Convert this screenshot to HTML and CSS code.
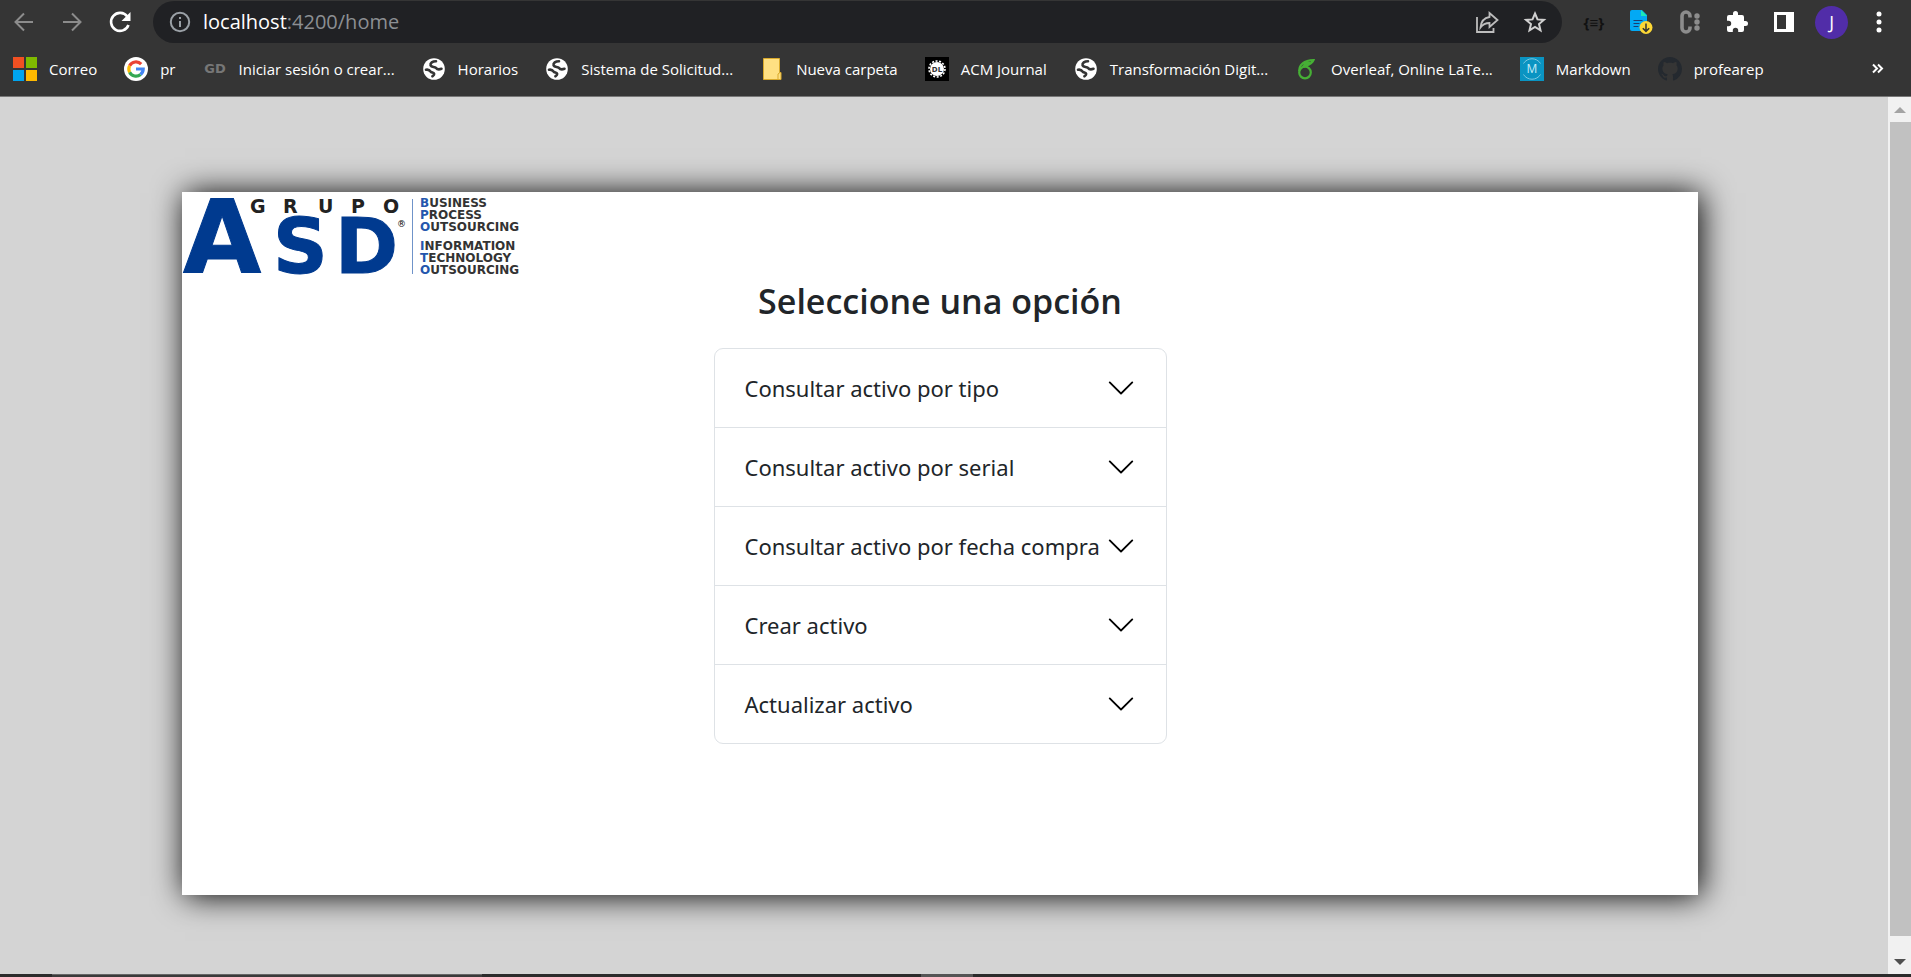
FILE: index.html
```html
<!DOCTYPE html>
<html lang="es">
<head>
<meta charset="utf-8">
<title>Inicio</title>
<link rel="stylesheet" href="styles.css">
</head>
<body>
<svg class="defs" aria-hidden="true">
  <symbol id="globe" viewBox="0 0 24 24"><circle cx="12" cy="12" r="10.800" fill="#fff"/><path d="M14 4.200C10.500 4.200 8 6 8.600 8.300c1 2 4 1.200 5.400 2.700 1.200 1.600 3.300 1.600 5.500.8M4 12.800c2.500-.6 3.800.6 4.800 2 1.500.9 3.200.5 3.400 2 .1 1.300-.8 1.800-1.800 2.500" fill="none" stroke="#353535" stroke-width="2.600" stroke-linecap="round" stroke-linejoin="round"/></symbol>
  <symbol id="chevron" viewBox="0 0 16 16"><path fill-rule="evenodd" d="M1.646 4.646a.5.5 0 0 1 .708 0L8 10.293l5.646-5.647a.5.5 0 0 1 .708.708l-6 6a.5.5 0 0 1-.708 0l-6-6a.5.5 0 0 1 0-.708z"/></symbol>
</svg>
<header class="browser">
  <div class="toolbar">
    <nav class="nav" aria-label="Navegación">
      <button class="tool" aria-label="Atrás"><svg width="20" height="20" viewBox="0 0 20 20" fill="none" stroke="#8c8c8c" stroke-width="2"><path d="M19 10H2M10 1.500 1.500 10 10 18.500"/></svg></button>
      <button class="tool" aria-label="Adelante"><svg width="20" height="20" viewBox="0 0 20 20" fill="none" stroke="#8c8c8c" stroke-width="2"><path d="M1 10h17M10 1.500 18.500 10 10 18.500"/></svg></button>
      <button class="tool" aria-label="Recargar"><svg width="22" height="22" viewBox="0 0 22 22"><path d="M18.300 5.500A9 9 0 1 0 19.500 14" fill="none" stroke="#fff" stroke-width="2.600"/><path d="M21.500 1v9h-9z" fill="#fff"/></svg></button>
    </nav>
    <div class="address">
      <svg width="22" height="22" viewBox="0 0 22 22"><circle cx="11" cy="11" r="9.200" fill="none" stroke="#9aa0a6" stroke-width="2"/><path d="M10 10h2v6h-2zM10 6h2v2h-2z" fill="#9aa0a6"/></svg>
      <span class="url"><span class="host">localhost</span>:4200/home</span>
      <button class="tool" aria-label="Compartir"><svg width="24" height="24" viewBox="0 0 24 24" fill="none" stroke="#bdbdbd" stroke-width="1.800"><path d="M2 7v15h16.500v-4"/><path d="M14.500 7V3l8 7-8 7v-4c-4 0-6.500 1-9 4.500C6 12 8.500 8 14.500 7z"/></svg></button>
      <button class="tool" aria-label="Favorito"><svg width="24" height="24" viewBox="0 0 24 24"><path d="M12 3.500l2.500 5.900 6.400.5-4.900 4.200 1.500 6.200L12 17l-5.500 3.300L8 14.100 3.100 9.900l6.400-.5z" fill="none" stroke="#d0d0d0" stroke-width="2"/></svg></button>
    </div>
    <div class="extensions">
      <button class="tool braces" aria-label="JSON">{≡}</button>
      <button class="tool" aria-label="Descargas"><svg width="24" height="26" viewBox="0 0 24 26"><path d="M3 1h10l5 5v16H3a2 2 0 0 1-2-2V3a2 2 0 0 1 2-2z" fill="#03a9f4"/><path d="M12 1l6 6h-6z" fill="#1de9b6"/><path d="M4.500 11.500h9M4.500 14.500h6M4.500 17.500h5" stroke="#1a3e72" stroke-width="1.200"/><circle cx="17" cy="18.500" r="6.500" fill="#fdd835"/><path d="M17 14.500v8M13.800 19.200l3.200 3.200 3.200-3.200" fill="none" stroke="#333" stroke-width="1.500"/></svg></button>
      <button class="tool" aria-label="Extensión"><svg width="24" height="24" viewBox="0 0 24 24" fill="#8c8c8c"><path d="M13 7.500V6a4 4 0 0 0-8 0v12a4 4 0 0 0 8 0v-1.500" fill="none" stroke="#8c8c8c" stroke-width="3.600"/><circle cx="20" cy="6" r="2.700"/><circle cx="20" cy="12" r="2.700"/><circle cx="20" cy="18" r="2.700"/></svg></button>
      <button class="tool" aria-label="Extensiones"><svg width="24" height="24" viewBox="0 0 24 24" fill="#fff"><path d="M20.500 11H19V7a2 2 0 0 0-2-2h-4V3.500a2.500 2.500 0 0 0-5 0V5H4a2 2 0 0 0-2 2v3.800h1.500a2.700 2.700 0 0 1 0 5.400H2V20a2 2 0 0 0 2 2h3.800v-1.500a2.700 2.700 0 0 1 5.400 0V22H17a2 2 0 0 0 2-2v-4h1.500a2.500 2.500 0 0 0 0-5z"/></svg></button>
      <button class="tool" aria-label="Panel lateral"><svg width="22" height="22" viewBox="0 0 22 22"><path d="M1 1h20v20H1zM4 4v14h9V4z" fill="#fff" fill-rule="evenodd"/></svg></button>
      <button class="tool" aria-label="Perfil"><span class="avatar">J</span></button>
      <button class="tool" aria-label="Menú"><svg width="20" height="22" viewBox="0 0 20 22" fill="#fff"><circle cx="10" cy="3" r="2.500"/><circle cx="10" cy="11" r="2.500"/><circle cx="10" cy="19" r="2.500"/></svg></button>
    </div>
  </div>
  <nav class="bookmarks" aria-label="Marcadores">
    <a href="#"><svg viewBox="0 0 24 24"><path d="M0 0h11v11H0z" fill="#f25022"/><path d="M13 0h11v11H13z" fill="#7fba00"/><path d="M0 13h11v11H0z" fill="#00a4ef"/><path d="M13 13h11v11H13z" fill="#ffb900"/></svg>Correo</a>
    <a href="#"><svg viewBox="0 0 24 24"><circle cx="12" cy="12" r="12" fill="#fff"/><g fill="none" stroke-width="3.200"><path d="M17.200 7.200A7.200 7.200 0 0 0 5.600 8.800" stroke="#ea4335"/><path d="M5.600 8.800a7.200 7.200 0 0 0 0 6.400" stroke="#fbbc05"/><path d="M5.600 15.200a7.200 7.200 0 0 0 11 2.300" stroke="#34a853"/><path d="M12 12h7.200a7.200 7.200 0 0 1-2.600 5.500" stroke="#4285f4"/></g></svg>pr</a>
    <a href="#"><svg viewBox="0 0 24 24"><text x="12" y="16" class="gd" text-anchor="middle">GD</text></svg>Iniciar sesión o crear...</a>
    <a href="#"><svg><use href="#globe"/></svg>Horarios</a>
    <a href="#"><svg><use href="#globe"/></svg>Sistema de Solicitud...</a>
    <a href="#"><svg viewBox="0 0 24 24"><path d="M3.500 1.500h16v14h1.500v7H3.500z" fill="#ffe082" stroke="#d9a92b"/><path d="M18 22v-5l2-1.500" fill="none" stroke="#d9a92b"/></svg>Nueva carpeta</a>
    <a href="#"><svg viewBox="0 0 24 24"><path d="M0 0h24v24H0z"/><circle cx="12" cy="12" r="7" fill="#fff"/><circle cx="12" cy="12" r="8" fill="none" stroke="#fff" stroke-width="1.600" stroke-dasharray="2 1.600"/><text x="12" y="15" class="dl" text-anchor="middle">DL</text></svg>ACM Journal</a>
    <a href="#"><svg><use href="#globe"/></svg>Transformación Digit...</a>
    <a href="#"><svg viewBox="0 0 24 24" fill="none" stroke="#46b035" stroke-width="2.200"><circle cx="10" cy="15.500" r="5.800"/><path d="M4.300 14C4 8 9 3.500 18.500 3.200c-1.500 4-5 4.500-10.500 6.800M8 9.800c2-3 4.500-4.400 7-5"/></svg>Overleaf, Online LaTe...</a>
    <a href="#"><svg viewBox="0 0 24 24"><path d="M0 0h24v24H0z" fill="#0a94c2"/><path d="M3.500 6.500a10 10 0 0 1 17 0M3.500 17.500a10 10 0 0 0 17 0" fill="none" stroke="#7cc8e0"/><text x="12" y="16" class="md" text-anchor="middle">M</text></svg>Markdown</a>
    <a href="#"><svg viewBox="0 0 16 16" fill="#24292f"><path d="M8 0C3.580 0 0 3.580 0 8c0 3.540 2.290 6.530 5.470 7.590.4.070.55-.17.55-.38 0-.19-.01-.82-.01-1.490-2.010.37-2.530-.49-2.690-.94-.09-.23-.48-.94-.82-1.130-.28-.15-.68-.52-.01-.53.63-.01 1.080.58 1.230.82.72 1.210 1.870.87 2.330.66.070-.52.28-.87.51-1.070-1.780-.2-3.640-.89-3.640-3.950 0-.87.31-1.590.82-2.150-.08-.2-.36-1.020.08-2.120 0 0 .67-.21 2.200.82.64-.18 1.320-.27 2-.27s1.360.09 2 .27c1.530-1.040 2.200-.82 2.200-.82.44 1.100.16 1.920.08 2.120.51.56.82 1.270.82 2.150 0 3.070-1.870 3.750-3.650 3.950.29.25.54.73.54 1.480 0 1.070-.01 1.930-.01 2.200 0 .21.15.46.55.38A8 8 0 0 0 16 8c0-4.420-3.580-8-8-8z"/></svg>profearep</a>
    <button class="more" aria-label="Más marcadores"><svg viewBox="0 0 24 24" fill="none" stroke="#fff" stroke-width="2"><path d="M8 7.500l4 4-4 4M13 7.500l4 4-4 4"/></svg></button>
  </nav>
</header>
<div class="viewport">
  <main class="page">
    <section class="card">
      <svg class="logo" width="344" height="83" viewBox="0 0 344 83" role="img" aria-label="Grupo ASD">
        <g class="asd"><text x="1" y="81" class="big">A</text><text x="91" y="81">S</text><text x="153" y="81">D</text></g>
        <text y="21" x="68 101 136 169 201" class="grupo">GRUPO</text>
        <text x="215" y="35" class="reg">®</text>
        <path d="M230.500 7v75" stroke="#6f93c9"/>
        <g class="lines">
          <text x="238" y="15"><tspan>B</tspan>USINESS</text>
          <text x="238" y="27"><tspan>P</tspan>ROCESS</text>
          <text x="238" y="39"><tspan>O</tspan>UTSOURCING</text>
          <text x="238" y="58"><tspan>I</tspan>NFORMATION</text>
          <text x="238" y="70"><tspan>T</tspan>ECHNOLOGY</text>
          <text x="238" y="82"><tspan>O</tspan>UTSOURCING</text>
        </g>
      </svg>
      <h1>Seleccione una opción</h1>
      <div class="accordion">
        <button>Consultar activo por tipo<svg><use href="#chevron"/></svg></button>
        <button>Consultar activo por serial<svg><use href="#chevron"/></svg></button>
        <button>Consultar activo por fecha compra<svg><use href="#chevron"/></svg></button>
        <button>Crear activo<svg><use href="#chevron"/></svg></button>
        <button>Actualizar activo<svg><use href="#chevron"/></svg></button>
      </div>
    </section>
  </main>
  <div class="scrollbar">
    <svg viewBox="0 0 23 25" fill="#a3a3a3"><path d="M6 16h12l-6-6z"/></svg>
    <div class="thumb"></div>
    <svg viewBox="0 0 23 25" fill="#505050"><path d="M6 10h12l-6 6z"/></svg>
  </div>
</div>
<footer class="taskbar"><div class="task"></div><div class="active-task"></div></footer>
</body>
</html>
```
FILE: styles.css
```css
* { box-sizing: border-box; }
body {
  margin: 0;
  height: 100vh;
  display: flex;
  flex-direction: column;
  overflow: hidden;
  font-family: "Open Sans", "Noto Sans", sans-serif;
  color: #212529;
}
button { border: 0; padding: 0; background: none; font: inherit; color: inherit; }
svg { flex: none; display: block; overflow: visible; }
.defs { position: absolute; width: 0; height: 0; }

.browser { background: #353535; border-bottom: 1px solid #777; color: #fff; }
.toolbar { display: flex; align-items: center; padding: 1px 8px 0 0; }
.nav { display: flex; width: 153px; }
.tool { display: flex; align-items: center; justify-content: center; width: 48px; height: 42px; }
.address {
  flex: 1;
  display: flex;
  align-items: center;
  height: 42px;
  padding: 0 3px 0 16px;
  border-radius: 21px;
  background: #202124;
}
.url { flex: 1; padding-left: 12px; font-size: 20px; line-height: 28px; color: #8c8f93; }
.host { color: #fff; }
.extensions { display: flex; width: 341px; padding-left: 8px; }
.extensions .tool { flex: 1; }
.braces { color: #111; font-size: 15px; font-weight: 700; }
.avatar { width: 33px; height: 33px; border-radius: 50%; background: #512da8; font-size: 18px; line-height: 33px; text-align: center; }

.bookmarks { display: flex; align-items: center; gap: 27px; height: 52px; margin-bottom: 1px; padding: 0 22px 0 13px; font-size: 15px; }
.bookmarks a { display: flex; align-items: center; gap: 12px; color: #fff; text-decoration: none; white-space: nowrap; }
.bookmarks svg { width: 24px; height: 24px; }
.more { margin-left: auto; }
.gd { font: 700 13px "DejaVu Sans", sans-serif; fill: #777; }
.dl { font: 700 7px "DejaVu Sans", sans-serif; fill: #333; }
.md { font: 12px "Open Sans", sans-serif; fill: #c6ecf8; }

.viewport { flex: 1; display: flex; min-height: 0; }
.page { flex: 1; padding: 95px 190px 0 182px; background: #d4d4d4; overflow: hidden; }
.card { min-height: 72vh; background: #fff; box-shadow: 3px 1px 30px #000; }
.logo { font-family: "DejaVu Sans", sans-serif; }
.asd { font-size: 76px; font-weight: 700; fill: #003a8f; stroke: #003a8f; stroke-width: 1; }
.asd .big { font-size: 101px; }
.grupo { font-size: 19px; font-weight: 700; fill: #222; }
.reg { font-size: 9px; }
.lines { font-size: 12px; font-weight: 700; fill: #333; }
.lines tspan { fill: #2456ad; }
h1 { margin: 4px 0 25px; text-align: center; font-size: 34px; line-height: 44px; font-weight: 600; }
.accordion { width: 453px; margin: 0 auto; border: 1px solid #dee2e6; border-radius: 9px; overflow: hidden; }
.accordion button {
  display: flex;
  align-items: center;
  justify-content: space-between;
  width: 100%;
  height: 79px;
  padding: 0 30px;
  font-family: "Noto Sans", "Open Sans", sans-serif;
  font-size: 22px;
  white-space: nowrap;
}
.accordion button:first-child { height: 78px; }
.accordion button + button { border-top: 1px solid #dee2e6; }
.accordion svg { width: 30px; height: 30px; }

.scrollbar { display: flex; flex-direction: column; width: 23px; background: #f1f1f1; }
.scrollbar svg { width: 23px; height: 25px; }
.thumb { flex: 1; margin: 0 0 13px 2px; background: #c1c1c1; }
.taskbar { display: flex; height: 3px; background: #2b2b2b; }
.task { width: 430px; margin-left: 52px; background: #3a3a3a; border-top: 1px solid #666; }
.active-task { width: 52px; margin-left: 439px; background: #555; }
```
